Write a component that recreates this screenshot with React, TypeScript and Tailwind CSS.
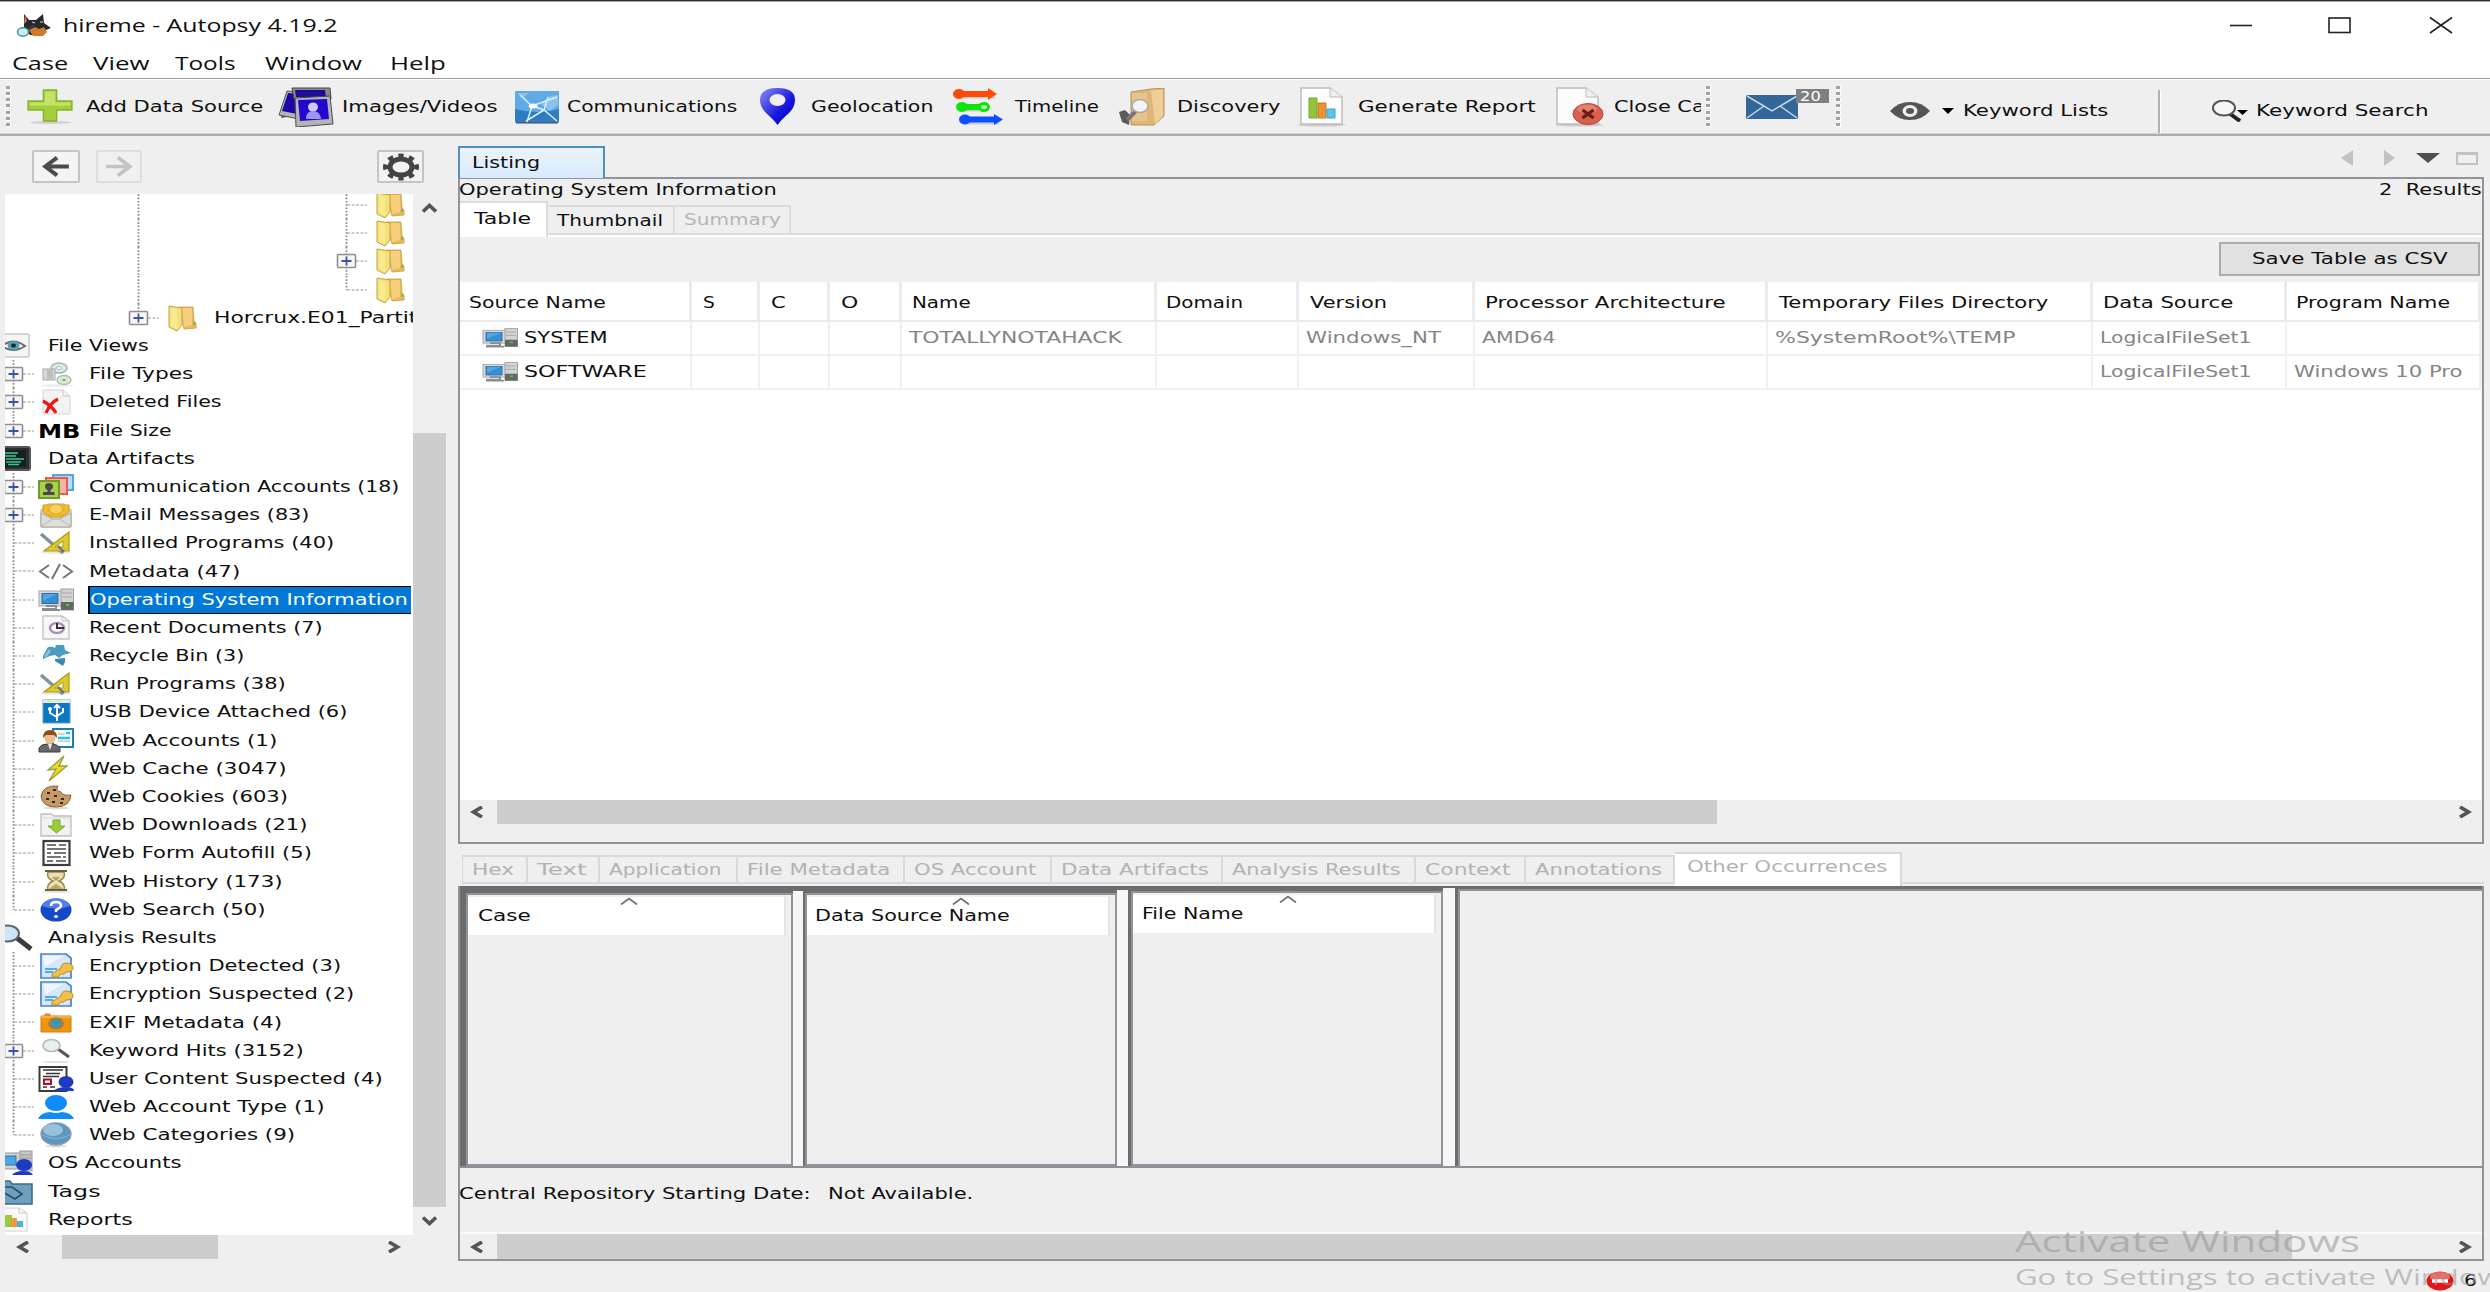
import React, { useLayoutEffect, useRef, useState } from "react";

/* Single line of text fitted horizontally to a given width. */
function T({ w, children, className = "" }: { w: number; children: string; className?: string }) {
  const ref = useRef<HTMLSpanElement>(null);
  const [scale, setScale] = useState(1);
  useLayoutEffect(() => {
    if (ref.current) setScale(w / ref.current.offsetWidth);
  }, [w, children]);
  return (
    <span className={"block shrink-0 whitespace-pre " + className} style={{ width: w }}>
      <span ref={ref} className="inline-block origin-left" style={{ transform: `scaleX(${scale})` }}>
        {children}
      </span>
    </span>
  );
}

type IconProps = { className?: string };
function Svg({ children, box = "0 0 36 28", className = "h-[28px] w-[36px]" }: { children: React.ReactNode; box?: string; className?: string }) {
  return (
    <svg viewBox={box} preserveAspectRatio="none" className={"shrink-0 " + className} fill="none">
      {children}
    </svg>
  );
}

const Folder = () => (
  <Svg>
    <path d="M14 3h14l1 14 2 2v5l-12 1z" fill="#e9b95a" stroke="#c99a3c" strokeWidth=".8" />
    <path d="M17 4h10v17l-8 2z" fill="#f8cf7c" />
    <path d="M4 2l13 2v17l-5 6-8-4z" fill="#f5e07a" stroke="#c2a33e" strokeWidth="1" />
    <path d="M6 4l6 2v19l-6-3z" fill="#fbee97" opacity=".7" />
    <path d="M29 18v3" stroke="#6fbf73" strokeWidth="2" />
  </Svg>
);
const EyeBox = () => (
  <Svg>
    <rect x="1" y="2" width="31" height="23" rx="1.5" fill="#f5f5f5" stroke="#c9c9c9" strokeWidth="1.5" />
    <path d="M5 14q11-9 23 0q-12 8-23 0z" fill="#fff" stroke="#6b6b6b" strokeWidth="2" />
    <ellipse cx="16.500" cy="13.500" rx="6" ry="4.500" fill="#4fa3b5" />
    <ellipse cx="16.500" cy="13.500" rx="2.500" ry="2" fill="#123" />
  </Svg>
);
const FileTypes = () => (
  <Svg>
    <ellipse cx="19" cy="25.500" rx="17" ry="1.500" fill="#eee" />
    <ellipse cx="21" cy="8" rx="8" ry="5" fill="#dfe9e6" stroke="#a9b0ae" strokeWidth="1.5" />
    <ellipse cx="21" cy="8" rx="2.500" ry="1.500" fill="#fff" stroke="#8cc" />
    <rect x="5" y="9" width="12" height="11" fill="#d8d8d8" stroke="#aaa" />
    <rect x="9" y="10" width="6" height="9" fill="#bdbdbd" />
    <ellipse cx="26" cy="20" rx="7" ry="4.500" fill="#dcebd0" stroke="#b4bdae" strokeWidth="1.5" />
    <ellipse cx="26" cy="20" rx="2" ry="1.300" fill="#7fbf6a" />
  </Svg>
);
const DeletedFiles = () => (
  <Svg>
    <path d="M5 2h20l7 6v18H5z" fill="#f3f3f3" stroke="#d5d5d5" />
    <path d="M25 2v6h7" stroke="#ccc" />
    <path d="M5 13q9 5 13 12M20 11q-8 4-12 14" stroke="#f01414" strokeWidth="3.200" />
  </Svg>
);
const Terminal = () => (
  <Svg>
    <rect x="0" y="2" width="33" height="23" rx="2" fill="#2c2f31" stroke="#55595b" strokeWidth="2" />
    <rect x="4" y="5" width="25" height="17" fill="#16211f" />
    <path d="M6 8h15M6 11h13M9 14h18M9 17h15M11 19.500h11" stroke="#37c795" strokeWidth="1.600" />
  </Svg>
);
const Accounts = () => (
  <Svg>
    <rect x="15" y="2" width="20" height="15" fill="#b5daf4" stroke="#56a5d8" strokeWidth="2" />
    <rect x="8" y="5" width="21" height="16" fill="#f5b3a9" stroke="#e2604c" strokeWidth="2" />
    <rect x="1" y="8" width="20" height="17" fill="#a8cf4f" stroke="#6d9c22" strokeWidth="2" />
    <ellipse cx="11" cy="13.500" rx="4" ry="3.500" fill="#4a4a4a" />
    <path d="M9.500 15h3v4h4v3H5v-3h4.500z" fill="#4a4a4a" />
  </Svg>
);
const Mail = () => (
  <Svg>
    <path d="M3 9l7-6h16l7 6v17H3z" fill="#e5e5e2" stroke="#a8a8a0" />
    <path d="M5 4h26v7l-8 5H13l-8-5z" fill="#f1bb2c" stroke="#d59b16" />
    <ellipse cx="18" cy="8" rx="7" ry="5" fill="#f7d05c" stroke="#d9a425" />
    <path d="M3 12l12 6h6l12-6v14H3z" fill="#dededa" stroke="#a9a9a2" />
    <path d="M4 25l10-7M32 25l-10-7" stroke="#b9b9b2" />
  </Svg>
);
const Programs = () => (
  <Svg>
    <ellipse cx="18" cy="23.500" rx="15" ry="1.500" fill="#e8e8e8" />
    <path d="M3 5l22 19" stroke="#7f919b" strokeWidth="3.500" />
    <path d="M31 3v19H6z" fill="#dcc832" stroke="#b09a14" strokeWidth="1.200" />
    <path d="M25 12v6h-8z" fill="#fff" stroke="#b09a14" />
    <path d="M20 17l6 6" stroke="#5f717b" strokeWidth="2" />
  </Svg>
);
const Code = () => (
  <Svg>
    <path d="M11 7L2 13.500L11 20M25 7l9 6.500L25 20M22 6l-8 15" stroke="#757575" strokeWidth="2" />
  </Svg>
);
const Computer = ({ className = "h-[28px] w-[36px]" }: IconProps) => (
  <Svg className={className}>
    <rect x="1" y="5" width="24" height="15" fill="#d9d9d9" stroke="#a5a5a5" />
    <rect x="4" y="7.500" width="16" height="10" fill="#3390d4" stroke="#2a6fa8" />
    <path d="M5 8h14l-14 7z" fill="#6bb6e8" opacity=".6" />
    <path d="M8 20h10v3H5v1h17" stroke="#8c8c8c" strokeWidth="2" />
    <rect x="23" y="3" width="12.500" height="21" fill="#d2d2d2" stroke="#a0a0a0" />
    <path d="M24 7h10M24 11h10" stroke="#aaa" />
    <rect x="23" y="16" width="12.500" height="8" fill="#666" />
    <rect x="28" y="18" width="3" height="2" fill="#3fcf3f" />
  </Svg>
);
const Recent = () => (
  <Svg>
    <path d="M5 2h19l7 5v18H5z" fill="#f7f7f7" stroke="#c3c3c3" strokeWidth="1.300" />
    <path d="M24 2v5h7" stroke="#c3c3c3" />
    <ellipse cx="19" cy="14" rx="7" ry="5" fill="#fff" stroke="#ab8db5" strokeWidth="2.500" />
    <path d="M19 9v5h7" stroke="#333" strokeWidth="2" />
  </Svg>
);
const Recycle = () => (
  <Svg>
    <path d="M5 14l5-9q4-1 7 1l1-3h8l1 5 6 3-8 2-4 3-4-3-5 1-7 3z" fill="#4c9cc0" />
    <path d="M12 8l-5 7" stroke="#8cc4dd" strokeWidth="2.500" />
    <path d="M17 17l10-1v4l-2 4-8-5z" fill="#3d89ad" />
  </Svg>
);
const Usb = () => (
  <Svg>
    <rect x="5" y="2" width="27" height="23" fill="#0b78c4" stroke="#5b9fcc" />
    <rect x="5" y="2" width="27" height="3" fill="#e9e9e9" />
    <path d="M9 3h3" stroke="#ee3" strokeWidth="2" />
    <path d="M19 8v15M12 11v4l7 4M25 10v4l-6 4M16 10l3-3 3 3" stroke="#fff" strokeWidth="2" />
    <circle cx="12" cy="11" r="2" fill="#fff" />
  </Svg>
);
const WebAccounts = () => (
  <Svg>
    <rect x="15" y="2" width="20" height="18" fill="#fff" stroke="#1c7fb0" strokeWidth="2" />
    <path d="M20 7h7M20 14h12" stroke="#bcc" strokeWidth="1.500" />
    <path d="M20 11h12M28 6h4" stroke="#24c3ee" strokeWidth="2.500" />
    <path d="M1 25v-4q2-4 8-4h6q6 1 7 5v3z" fill="#686868" stroke="#3c3c3c" />
    <path d="M10 17h4l-2 6z" fill="#eee" />
    <ellipse cx="12" cy="11" rx="5.500" ry="6" fill="#efbf93" />
    <path d="M5 11q0-8 7-8t7 8l-3-3H8z" fill="#8e4e1c" />
  </Svg>
);
const Cache = () => (
  <Svg>
    <path d="M26 1L10 15l8-1-7 12 18-15h-8z" fill="#e6dc1c" stroke="#9d9a4a" strokeWidth="1.300" />
  </Svg>
);
const Cookie = () => (
  <Svg>
    <ellipse cx="18" cy="25" rx="13" ry="1.500" fill="#ddd" />
    <path d="M20 3q-3 5 3 6 1 4 10 3-1 12-15 12T3 13Q5 2 20 3z" fill="#c49a68" stroke="#8a6437" />
    <path d="M9 10h3M15 7h3M8 16h3M16 13h3M14 19h3M23 16h3M22 20h3" stroke="#3e2611" strokeWidth="2.200" />
  </Svg>
);
const Download = () => (
  <Svg>
    <path d="M3 3h10l3 2h17v20H3z" fill="#f2f2f2" stroke="#bdbdbd" strokeWidth="1.300" />
    <path d="M3 7h30" stroke="#d8d8d8" />
    <path d="M15 9h7v6h5l-8.500 7L10 15h5z" fill="#9acb3c" stroke="#7aa92c" />
  </Svg>
);
const Form = () => (
  <Svg>
    <rect x="5.500" y="2" width="26" height="24" fill="#fff" stroke="#3d3d3d" strokeWidth="2.200" />
    <path d="M9 6h9M21 6h7M9 10h19M9 14h4M16 14h12M9 18h14M25 18h3M9 22h6M18 22h10" stroke="#4a4a4a" strokeWidth="1.700" />
  </Svg>
);
const Hourglass = () => (
  <Svg>
    <ellipse cx="18" cy="24" rx="15" ry="1" fill="#e5e5e5" />
    <path d="M10 4h16q2 6-5 9 7 3 5 9H10q-2-6 5-9-7-3-5-9z" fill="#e8dfb5" stroke="#9a8a4e" strokeWidth="1.500" />
    <path d="M12 20l6-4 6 4v2H12zM14 9h8l-4 4z" fill="#b7a45f" />
    <path d="M7 3h22M7 22h22" stroke="#6e6034" strokeWidth="2.200" />
  </Svg>
);
const Help = () => (
  <Svg>
    <ellipse cx="18" cy="14" rx="15.500" ry="11.500" fill="#1549c9" />
    <path d="M4 10q4-8 14-8t14 8q-13 5-28 0z" fill="#5f8df0" opacity=".8" />
    <path d="M13 10q0-4 5-4t5 3.500q0 2-5 4.500v2" stroke="#fff" strokeWidth="2.600" />
    <ellipse cx="18" cy="20.500" rx="2" ry="1.600" fill="#fff" />
  </Svg>
);
const Analysis = () => (
  <Svg>
    <path d="M20 14l14 11" stroke="#3b3b3b" strokeWidth="5" />
    <ellipse cx="11" cy="9.500" rx="11" ry="8" fill="#cfe4f5" stroke="#5c6268" strokeWidth="2" />
  </Svg>
);
const Encryption = () => (
  <Svg>
    <path d="M3 2h25l5 4v20H3z" fill="#d5e7fa" stroke="#4a83c9" strokeWidth="1.700" />
    <path d="M5 4l20 0-18 11z" fill="#eef6fe" />
    <path d="M7 17h12M7 20h8" stroke="#5aa8e8" strokeWidth="2" />
    <path d="M14 25v-3l9-6q0-5 6-5 6 1 6 5t-7 4l-2 2h-3l-3 3z" fill="#f0c14a" stroke="#b98c22" />
  </Svg>
);
const Camera = () => (
  <Svg>
    <path d="M3 7h4V5h5v2h21v16H3z" fill="#f0960e" stroke="#d27f06" />
    <path d="M3 8h30" stroke="#f9bb58" strokeWidth="1.500" />
    <ellipse cx="18" cy="14.500" rx="7" ry="5.500" fill="#5f8f96" stroke="#b5772a" strokeWidth="1.500" />
    <ellipse cx="18" cy="14.500" rx="3.500" ry="3" fill="#2e9ab5" />
  </Svg>
);
const Lens = () => (
  <Svg>
    <ellipse cx="18" cy="25" rx="15" ry="1" fill="#e0e0e0" />
    <path d="M20 12l11 8" stroke="#555" strokeWidth="3" />
    <ellipse cx="13.500" cy="8.500" rx="8.500" ry="6" fill="#e6f0f0" stroke="#b5baba" strokeWidth="1.700" />
  </Svg>
);
const UserContent = () => (
  <Svg>
    <rect x="1.500" y="2" width="27" height="24" fill="#fff" stroke="#3a3a3a" strokeWidth="2" />
    <path d="M5 5h20M8 8.500h14M5 11.500h16M5 22h4M12 22h5" stroke="#333" strokeWidth="1.500" />
    <rect x="6" y="14.500" width="7" height="4.500" stroke="#b01030" strokeWidth="2" />
    <ellipse cx="28" cy="17" rx="7.500" ry="6" fill="#1d3bc1" />
    <path d="M15 26q5-4 13-4t8 4z" fill="#1d3bc1" />
  </Svg>
);
const Person = () => (
  <Svg>
    <ellipse cx="18" cy="10" rx="11" ry="8" fill="#0f8bfd" />
    <path d="M0 26q2-6 12-7 6 2 12 0 10 1 12 7z" fill="#0f8bfd" />
  </Svg>
);
const Globe = () => (
  <Svg>
    <ellipse cx="18" cy="25" rx="11" ry="1.500" fill="#ddd" />
    <ellipse cx="18" cy="13" rx="15" ry="11" fill="#5e97bd" stroke="#8a9ba8" strokeWidth="1.300" />
    <ellipse cx="15" cy="9" rx="10" ry="6" fill="#b3d3e8" opacity=".7" />
    <path d="M4 14q14 7 28 0" stroke="#86b5d3" />
  </Svg>
);
const OsAccounts = () => (
  <Svg>
    <rect x="0" y="4" width="24" height="16" fill="#d2d2d2" stroke="#999" />
    <rect x="2" y="7" width="17" height="9" fill="#4da5e2" stroke="#2b75ad" />
    <rect x="23" y="2" width="12" height="20" fill="#c5c5c5" stroke="#999" />
    <path d="M24 6h10M24 9h10" stroke="#999" />
    <ellipse cx="27" cy="16" rx="8" ry="6" fill="#1d3bc1" />
    <path d="M15 26q3-4 11-4t10 4z" fill="#1d3bc1" />
  </Svg>
);
const TagsIcon = () => (
  <Svg>
    <path d="M0 3h13l2 3h20v20H0z" fill="#6f9fbe" stroke="#3d6986" strokeWidth="1.500" />
    <path d="M6 9h9l10 7-7 5L6 14z" stroke="#2c4c63" strokeWidth="1.700" />
  </Svg>
);
const Reports = () => (
  <Svg>
    <path d="M4 2h18l8 5v18H4z" fill="#fafafa" stroke="#cfcfcf" />
    <path d="M22 2v5h8" stroke="#ccc" />
    <path d="M4 9h11v12H4z" fill="#9acb3c" />
    <path d="M14 12h6v9h-6z" fill="#f29a3a" />
    <path d="M20 15h6v6h-6z" fill="#41b8e0" />
  </Svg>
);
const Mb = () => (
  <span className="-mr-[6px] block font-bold text-black">
    <T w={42} className="text-[19px] leading-[28px]">MB</T>
  </span>
);

type Item = { icon: () => React.ReactElement; t: string; w: number; root?: boolean; plus?: boolean; sel?: boolean; last?: boolean };
const items: Item[] = [
  { icon: EyeBox, t: "File Views", w: 101, root: true },
  { icon: FileTypes, t: "File Types", w: 105, plus: true },
  { icon: DeletedFiles, t: "Deleted Files", w: 133, plus: true },
  { icon: Mb, t: "File Size", w: 83, plus: true, last: true },
  { icon: Terminal, t: "Data Artifacts", w: 147, root: true },
  { icon: Accounts, t: "Communication Accounts (18)", w: 311, plus: true },
  { icon: Mail, t: "E-Mail Messages (83)", w: 221, plus: true },
  { icon: Programs, t: "Installed Programs (40)", w: 245 },
  { icon: Code, t: "Metadata (47)", w: 151 },
  { icon: Computer, t: "Operating System Information", w: 318, sel: true },
  { icon: Recent, t: "Recent Documents (7)", w: 234 },
  { icon: Recycle, t: "Recycle Bin (3)", w: 155 },
  { icon: Programs, t: "Run Programs (38)", w: 197 },
  { icon: Usb, t: "USB Device Attached (6)", w: 258 },
  { icon: WebAccounts, t: "Web Accounts (1)", w: 188 },
  { icon: Cache, t: "Web Cache (3047)", w: 197 },
  { icon: Cookie, t: "Web Cookies (603)", w: 199 },
  { icon: Download, t: "Web Downloads (21)", w: 219 },
  { icon: Form, t: "Web Form Autofill (5)", w: 223 },
  { icon: Hourglass, t: "Web History (173)", w: 193 },
  { icon: Help, t: "Web Search (50)", w: 177, last: true },
  { icon: Analysis, t: "Analysis Results", w: 169, root: true },
  { icon: Encryption, t: "Encryption Detected (3)", w: 252 },
  { icon: Encryption, t: "Encryption Suspected (2)", w: 265 },
  { icon: Camera, t: "EXIF Metadata (4)", w: 193 },
  { icon: Lens, t: "Keyword Hits (3152)", w: 215, plus: true },
  { icon: UserContent, t: "User Content Suspected (4)", w: 294 },
  { icon: Person, t: "Web Account Type (1)", w: 236 },
  { icon: Globe, t: "Web Categories (9)", w: 206, last: true },
  { icon: OsAccounts, t: "OS Accounts", w: 134, root: true },
  { icon: TagsIcon, t: "Tags", w: 52, root: true },
  { icon: Reports, t: "Reports", w: 84, root: true },
];

/* Dotted tree connector, 31px wide, with the vertical line 10px from its left edge. */
function Branch({ plus, last }: { plus?: boolean; last?: boolean }) {
  return (
    <svg viewBox="0 0 31 28.190" className="h-[28.190px] w-[31px] shrink-0" fill="none">
      <path d={last ? "M10.500 0V14" : "M10.500 0V28.190"} stroke="#8a8a8a" strokeDasharray="1.600 1.700" strokeWidth="1.800" />
      <path d="M11 14H31" stroke="#9a9a9a" strokeDasharray="3 1.500" strokeWidth="1.200" />
      {plus && (
        <>
          <rect x="1.500" y="7.500" width="18" height="13" rx="1" fill="#f6f6f6" stroke="#8e8e8e" strokeWidth="1.600" />
          <path d="M5.500 14h10M10.500 9.500v9" stroke="#3a55a0" strokeWidth="1.800" />
        </>
      )}
    </svg>
  );
}

function TreeRow({ it }: { it: Item }) {
  const Icon = it.icon;
  if (it.root)
    return (
      <div className="flex h-[28.190px] items-center">
        <div className="-ml-[8px] mr-[15px] w-[36px]"><Icon /></div>
        <T w={it.w}>{it.t}</T>
      </div>
    );
  return (
    <div className="flex h-[28.190px] items-center">
      <div className="-ml-[2px]"><Branch plus={it.plus} last={it.last} /></div>
      <div className="ml-[4px] mr-[14px] w-[36px]"><Icon /></div>
      {it.sel ? (
        <div className="flex h-[28px] w-[323px] items-center border-y border-l-2 border-black bg-[#0078d7] text-white">
          <T w={it.w}>{it.t}</T>
        </div>
      ) : (
        <div className="pl-[1px]"><T w={it.w}>{it.t}</T></div>
      )}
    </div>
  );
}

function Chevron({ d, className }: { d: "l" | "r" | "u" | "d"; className: string }) {
  const p = { l: "M12 1L3.500 6L12 11", r: "M3 1l8.500 5L3 11", u: "M1 9.500L7.500 3.500L14 9.500", d: "M1 2.500L7.500 8.500L14 2.500" }[d];
  return (
    <svg viewBox="0 0 15 12" preserveAspectRatio="none" className={"h-[12px] w-[15px] shrink-0 " + className} fill="none">
      <path d={p} stroke="#555" strokeWidth="3.700" />
    </svg>
  );
}

function Grip() {
  return (
    <div className="flex h-[42px] w-[6px] shrink-0 flex-col justify-between">
      {[0, 1, 2, 3, 4, 5, 6].map((i) => (
        <div key={i} className="h-[4px] w-[5px] border-b border-r border-white bg-[#a2a2a2]" />
      ))}
    </div>
  );
}

const cols = [
  { h: "Source Name", w: 137, cw: "w-[232px]", pl: "pl-[9px]" },
  { h: "S", w: 12, cw: "w-[68px]", pl: "pl-[11px]" },
  { h: "C", w: 15, cw: "w-[70px]", pl: "pl-[11px]" },
  { h: "O", w: 17, cw: "w-[72px]", pl: "pl-[11px]" },
  { h: "Name", w: 59, cw: "w-[255px]", pl: "pl-[10px]" },
  { h: "Domain", w: 77, cw: "w-[142px]", pl: "pl-[9px]" },
  { h: "Version", w: 77, cw: "w-[176px]", pl: "pl-[11px]" },
  { h: "Processor Architecture", w: 240, cw: "w-[293px]", pl: "pl-[10px]" },
  { h: "Temporary Files Directory", w: 270, cw: "w-[325px]", pl: "pl-[11px]" },
  { h: "Data Source", w: 130, cw: "w-[194px]", pl: "pl-[10px]" },
  { h: "Program Name", w: 154, cw: "w-[194px]", pl: "pl-[9px]" },
];
const rows: [string, number][][] = [
  [["SYSTEM", 84], ["", 0], ["", 0], ["", 0], ["TOTALLYNOTAHACK", 213], ["", 0], ["Windows_NT", 135], ["AMD64", 74], ["%SystemRoot%\\TEMP", 241], ["LogicalFileSet1", 152], ["", 0]],
  [["SOFTWARE", 123], ["", 0], ["", 0], ["", 0], ["", 0], ["", 0], ["", 0], ["", 0], ["", 0], ["LogicalFileSet1", 152], ["Windows 10 Pro", 168]],
];

const tabs = [
  { t: "Hex", w: 42, cw: "w-[65px]" },
  { t: "Text", w: 49, cw: "w-[72px]" },
  { t: "Application", w: 113, cw: "w-[138px]" },
  { t: "File Metadata", w: 143, cw: "w-[167px]" },
  { t: "OS Account", w: 123, cw: "w-[147px]" },
  { t: "Data Artifacts", w: 148, cw: "w-[171px]" },
  { t: "Analysis Results", w: 169, cw: "w-[193px]" },
  { t: "Context", w: 86, cw: "w-[110px]" },
  { t: "Annotations", w: 127, cw: "w-[149px]" },
];

function MiniTable({ t, w, cw, caret, pt, pl }: { t: string; w: number; cw: string; caret: string; pt: string; pl: string }) {
  return (
    <div className={"shrink-0 " + pt}>
      <div className={"h-full border-2 border-[#90939a] bg-[#efefef] " + cw}>
        <div className={"mr-[5px] h-[38px] border-r-2 border-[#e4e4e4] bg-white " + pl}>
          <svg viewBox="0 0 18 8" className={"block h-[8px] w-[18px] " + caret} fill="none">
            <path d="M1 7.500L9 1.500l8 6" stroke="#6f6f6f" strokeWidth="1.700" />
          </svg>
          <T w={w} className="leading-[22px]">{t}</T>
        </div>
      </div>
    </div>
  );
}

function TitleBar() {
  return (
    <div className="flex h-[45px] shrink-0 items-center bg-white font-['Open_Sans','Noto_Sans',sans-serif] text-[18px]">
      <Svg box="0 0 36 24" className="ml-[16px] h-[24px] w-[36px]">
        <path d="M8 1l5 6h7l7-6 1 9 7 5-5 2-4 5H14L8 15z" fill="#26282c" />
        <path d="M9 2l2 6-3 3z" fill="#d77b4e" />
        <path d="M13 17l6-3 4 2 5-2 3 5-4 4H17z" fill="#cf7a26" />
        <path d="M16 9l3 1M24 9l3 0" stroke="#ddd" />
        <ellipse cx="7" cy="19" rx="5.500" ry="4.200" fill="#c2f0f5" stroke="#4d8e98" strokeWidth="1.500" />
        <path d="M12 16l6-4" stroke="#444" strokeWidth="1.500" />
      </Svg>
      <T w={275} className="ml-[11px]">hireme - Autopsy 4.19.2</T>
      <svg viewBox="0 0 224 18" className="ml-auto mr-[37px] h-[18px] w-[224px]" fill="none" stroke="#222" strokeWidth="1.600">
        <path d="M1 9.500h22" />
        <rect x="100" y="2" width="21" height="14.500" />
        <path d="M201 1.500l22 15.500M223 1.500L201 17" />
      </svg>
    </div>
  );
}

function Toolbar() {
  return (
    <div className="flex h-[53px] shrink-0 items-center overflow-hidden bg-[#efefef]">
      <div className="ml-[6px]"><Grip /></div>
      <Svg box="0 0 46 36" className="ml-[14px] h-[36px] w-[47px]">
        <ellipse cx="24" cy="33.500" rx="20" ry="1.500" fill="#cfcfcf" />
        <path d="M17 1h13v11h15v9H30v11H17V21H2v-9h15z" fill="#a4cf3a" stroke="#86b12a" strokeWidth="1.300" />
        <path d="M18.500 2.500h10v11h15v3h-40v-3h15z" fill="#c4e26c" />
      </Svg>
      <T w={177} className="ml-[13px]">Add Data Source</T>
      <Svg box="0 0 56 40" className="ml-[15px] h-[40px] w-[56px]">
        <path d="M9 5l36-2 6 20-48 8z" fill="#5a5a5a" />
        <path d="M9 4l18 2-6 26-20-4z" fill="#b5b5b5" stroke="#555" />
        <path d="M10 6l14 1-5 20-15-3z" fill="#1a08a8" />
        <path d="M14 1h38l1 11H16z" fill="#8b8b8b" stroke="#444" />
        <path d="M17 3h30l1 7H18z" fill="#1b0b96" />
        <path d="M17 11l35-2 3 28-37 3z" fill="#b4b4b4" stroke="#4a4a4a" />
        <path d="M20 13l29-1 2 20-29 2z" fill="#2208cf" />
        <ellipse cx="35" cy="20" rx="5" ry="4.500" fill="#cfc9ff" />
        <path d="M28 32q0-8 7-8t8 8z" fill="#9f94f0" />
      </Svg>
      <T w={155} className="ml-[8px]">Images/Videos</T>
      <Svg box="0 0 46 34" className="ml-[17px] h-[34px] w-[46px]">
        <rect x="1" y="1" width="44" height="32" rx="2" fill="#2f7dc0" />
        <path d="M1 3q0-2 2-2h40q2 0 2 2v16q-22 6-44 0z" fill="#5fa9e4" />
        <path d="M27 14l9-8 8-1v10l-8 6zM3 3h12L9 8z" fill="#9bcdf1" opacity=".7" />
        <path d="M6 5l12 11 25-9M18 16l-5 16M18 16l12 4 13 11M30 20L12 31M30 20l4-13" stroke="#d8effd" strokeWidth="1.500" />
        <ellipse cx="19" cy="16" rx="4.500" ry="2.500" fill="#fff" />
        <path d="M2 33h42" stroke="#4a4a4a" />
      </Svg>
      <T w={170} className="ml-[7px]">Communications</T>
      <Svg box="0 0 37 39" className="ml-[22px] h-[39px] w-[37px]">
        <defs>
          <linearGradient id="pin" x1="0" y1="0" x2="1" y2="1">
            <stop offset="0" stopColor="#8c8ff0" />
            <stop offset=".6" stopColor="#1616e0" />
            <stop offset="1" stopColor="#0000b8" />
          </linearGradient>
        </defs>
        <path d="M18.500 1Q36 1 36 13q0 7-6 13-8 7-11.500 12Q15 33 7 26 1 20 1 13 1 1 18.500 1z" fill="url(#pin)" />
        <ellipse cx="18.500" cy="13" rx="8" ry="6" fill="#efefef" />
      </Svg>
      <T w={123} className="ml-[15px]">Geolocation</T>
      <Svg box="0 0 52 38" className="ml-[18px] h-[38px] w-[52px]">
        <path d="M3 8h40M11 34h36M8 21h24" stroke="#aaa" strokeWidth="5" opacity=".5" />
        <path d="M6 6h34" stroke="#ff4a05" strokeWidth="6" />
        <path d="M36 0l9 6-9 6z" fill="#ff4a05" />
        <ellipse cx="7" cy="6" rx="6" ry="5" fill="#ff4a05" />
        <path d="M10 19h20" stroke="#0be50b" strokeWidth="6" />
        <ellipse cx="10" cy="19" rx="6" ry="5" fill="#0be50b" />
        <ellipse cx="32" cy="19" rx="4.500" ry="3.500" fill="#b8f5b8" stroke="#0be50b" strokeWidth="3" />
        <path d="M13 31.500h30" stroke="#0a50ff" strokeWidth="6" />
        <path d="M42 26l9 5.500-9 5.500z" fill="#0a50ff" />
        <ellipse cx="13" cy="31.500" rx="6" ry="5" fill="#0a50ff" />
      </Svg>
      <T w={84} className="ml-[11px]">Timeline</T>
      <Svg box="0 0 46 38" className="ml-[20px] h-[38px] w-[46px]">
        <path d="M12 4l20-3 13-1v28l-10 9H12z" fill="#dcb776" stroke="#b9935a" />
        <path d="M32 2h12v26l-8 8z" fill="#f0cf96" />
        <path d="M13 5h15v28H13z" fill="#e6c48c" />
        <path d="M0 24l6-2 5 5-1 10-7-3z" fill="#5a5a5a" />
        <path d="M8 32l9-9" stroke="#777" strokeWidth="4" />
        <ellipse cx="21" cy="18" rx="8" ry="6.500" fill="#f3f3f3" stroke="#aaa" strokeWidth="1.500" />
      </Svg>
      <T w={104} className="ml-[12px]">Discovery</T>
      <Svg box="0 0 50 40" className="ml-[16px] h-[40px] w-[50px]">
        <ellipse cx="25" cy="38" rx="24" ry="1.500" fill="#ccc" />
        <path d="M4 1h29l12 9v27H4z" fill="#fdfdfd" stroke="#bdbdbd" strokeWidth="1.500" />
        <path d="M33 1v9h12" fill="#eee" stroke="#bdbdbd" />
        <path d="M12 11h8v20h-8z" fill="#93c53c" stroke="#78a52d" />
        <path d="M21 16h8v15h-8z" fill="#eb9437" stroke="#c97622" />
        <path d="M30 22h8v9h-8z" fill="#5ac5e8" stroke="#3aa5cc" />
      </Svg>
      <T w={178} className="ml-[11px]">Generate Report</T>
      <Svg box="0 0 52 40" className="ml-[18px] h-[40px] w-[52px]">
        <ellipse cx="25" cy="38" rx="24" ry="1.500" fill="#ccc" />
        <path d="M3 1h29l12 9v27H3z" fill="#fbfbfb" stroke="#bdbdbd" strokeWidth="1.500" />
        <path d="M32 1v9h12" fill="#eee" stroke="#bdbdbd" />
        <ellipse cx="34" cy="27" rx="15" ry="10.500" fill="#d95f4f" stroke="#b84a3c" />
        <ellipse cx="33" cy="22" rx="10" ry="4.500" fill="#ee9586" opacity=".6" />
        <path d="M28.500 23l11 8M39.500 23l-11 8" stroke="#6a1d15" strokeWidth="3.400" />
      </Svg>
      <div className="ml-[8px] w-[87px] overflow-hidden"><T w={90}>Close Ca</T></div>
      <div className="ml-[5px]"><Grip /></div>
      <div className="relative ml-[33px] h-[36px] w-[86px]">
        <Svg box="0 0 54 26" className="mt-[5px] h-[26px] w-[54px]">
          <rect x="1" y="1" width="52" height="24" rx="1.500" fill="#336699" />
          <path d="M2 2l25 15L52 2M2 24l17-12M52 24L35 12" stroke="#c8d8e8" strokeWidth="1.500" />
        </Svg>
        <span className="absolute left-[51px] top-0 flex h-[14px] w-[33px] items-center bg-[#7f7f7f] pl-[4px] text-[14px] leading-[14px] text-white">
          <T w={21}>20</T>
        </span>
      </div>
      <div className="ml-[5px]"><Grip /></div>
      <div className="flex h-full items-center pt-[8px]">
        <Svg box="0 0 40 18" className="ml-[48px] h-[18px] w-[40px]">
          <path d="M0 9Q8 0 20 0t20 9q-8 9-20 9T0 9z" fill="#555" />
          <ellipse cx="20" cy="9" rx="7.500" ry="6" fill="#efefef" />
          <ellipse cx="20" cy="9" rx="4" ry="3" fill="#555" />
        </Svg>
        <Svg box="0 0 12 6" className="ml-[12px] h-[6px] w-[12px]"><path d="M0 0h12L6 6z" fill="#000" /></Svg>
        <T w={145} className="ml-[9px]">Keyword Lists</T>
      </div>
      <div className="ml-[50px] mt-[10px] h-[43px] w-[3px] border-r border-white bg-[#b0b0b0]" />
      <div className="flex h-full items-center pt-[8px]">
        <Svg box="0 0 38 22" className="ml-[50px] h-[22px] w-[38px]">
          <path d="M18 13l11 8" stroke="#222" strokeWidth="4" />
          <ellipse cx="13" cy="8" rx="11" ry="7.500" fill="#f6f6f6" stroke="#555" strokeWidth="2" />
          <path d="M26 10h11l-5.500 5z" fill="#000" />
        </Svg>
        <T w={172} className="ml-[7px]">Keyword Search</T>
      </div>
    </div>
  );
}

function FolderBranch({ plus, last }: { plus?: boolean; last?: boolean }) {
  return (
    <div className="flex h-[28.190px] shrink-0 items-center">
      <svg viewBox="0 0 200 28.190" className="h-[28.190px] w-[200px] shrink-0" fill="none">
        <path d="M133.500 0V28.190" stroke="#8a8a8a" strokeDasharray="1.600 1.700" strokeWidth="1.800" />
      </svg>
      <div className="ml-[131px]"><Branch plus={plus} last={last} /></div>
      <div className="ml-[6px]"><Folder /></div>
    </div>
  );
}

function Sidebar() {
  return (
    <div className="flex h-full w-[458px] shrink-0 flex-col">
      <div className="flex h-[61px] shrink-0 items-center">
        <div className="ml-[32px] flex h-[33px] w-[48px] items-center justify-center rounded-[2px] border-2 border-[#c4c4c4] bg-[#f4f4f4]">
          <Svg box="0 0 26 20" className="h-[21px] w-[28px]"><path d="M25 10H3M14 1.500L3 10l11 8.500" stroke="#4c4c4c" strokeWidth="3.800" /></Svg>
        </div>
        <div className="ml-[16px] flex h-[33px] w-[46px] items-center justify-center rounded-[2px] border-2 border-[#dedede] bg-[#f0f0f0]">
          <Svg box="0 0 26 20" className="h-[21px] w-[28px]"><path d="M1 10h22M12 1.500L23 10l-11 8.500" stroke="#c3c3c3" strokeWidth="3.500" /></Svg>
        </div>
        <div className="ml-[235px] flex h-[33px] w-[47px] items-center justify-center rounded-[2px] border-2 border-[#c4c4c4] bg-[#f2f2f2]">
          <Svg box="0 0 38 28" className="h-[28px] w-[38px]">
            <ellipse cx="19" cy="14" rx="15.500" ry="11" stroke="#444" strokeWidth="5" strokeDasharray="5 5" strokeDashoffset="2.500" pathLength="80" />
            <ellipse cx="19" cy="14" rx="11" ry="8" stroke="#444" strokeWidth="5" />
          </Svg>
        </div>
      </div>
      <div className="-mt-[3px] flex h-[1041px] shrink-0">
        <div className="ml-[5px] w-[408px] overflow-hidden bg-white text-[#101010]">
          <div className="-mt-[3px]">
            <FolderBranch />
            <FolderBranch />
            <FolderBranch plus />
            <FolderBranch last />
            <div className="flex h-[28.190px] items-center">
              <div className="ml-[123px]"><Branch plus last /></div>
              <div className="ml-[6px] mr-[13px]"><Folder /></div>
              <T w={203}>Horcrux.E01_Partit</T>
            </div>
            {items.map((it) => (
              <TreeRow key={it.t} it={it} />
            ))}
          </div>
        </div>
        <div className="flex w-[33px] flex-col">
          <Chevron d="u" className="ml-[9px] mt-[8px]" />
          <div className="mt-[219px] h-[774px] bg-[#cdcdcd]" />
          <Chevron d="d" className="ml-[9px] mt-[8px]" />
        </div>
      </div>
      <div className="flex h-[24px] shrink-0 items-center">
        <Chevron d="l" className="ml-[16px]" />
        <div className="ml-[31px] h-full w-[156px] bg-[#cdcdcd]" />
        <Chevron d="r" className="ml-[168px]" />
      </div>
    </div>
  );
}

function Listing() {
  return (
    <div className="flex h-[708px] w-[2026px] shrink-0 flex-col">
      <div className="flex h-[41px] shrink-0 items-end">
        <div className="relative z-10 -mb-[1px] flex h-[32px] w-[147px] items-center border-x-2 border-t-2 border-[#4f8fbf] bg-gradient-to-b from-[#ecf4fc] to-[#d9eafc] pl-[12px]">
          <T w={68}>Listing</T>
        </div>
        <svg viewBox="0 0 140 18" className="mb-[10px] ml-auto mr-[5px] h-[18px] w-[140px]" fill="none">
          <path d="M14 1v16L2 9zM45 1v16l11-8z" fill="#c2c2c2" />
          <path d="M77 4h24l-12 10z" fill="#4f4f4f" />
          <path d="M118 4h20v11h-20z" stroke="#c2c2c2" strokeWidth="2" />
          <path d="M117 4.500h22" stroke="#c2c2c2" strokeWidth="3" />
        </svg>
      </div>
      <div className="flex h-[667px] shrink-0 flex-col border-2 border-[#90939a] bg-[#efefef]">
        <div className="flex h-[22px] shrink-0 items-center">
          <T w={318} className="-ml-[1px]">Operating System Information</T>
          <T w={103} className="ml-auto">2  Results</T>
        </div>
        <div className="flex h-[36px] shrink-0 items-end">
          <div className="flex h-[36px] w-[88px] items-center border-r-2 border-t-2 border-[#dcdcdc] bg-white pb-[3px] pl-[14px]">
            <T w={57}>Table</T>
          </div>
          <div className="flex h-[32px] flex-1 border-b-[2px] border-white">
            <div className="flex h-[30px] w-[127px] items-center border-y-2 border-r-2 border-[#dcdcdc] pl-[9px] pt-[2px]"><T w={106}>Thumbnail</T></div>
            <div className="flex h-[30px] w-[116px] items-center border-y-2 border-r-2 border-[#dcdcdc] pl-[9px] text-[#b5b5b5]"><T w={97}>Summary</T></div>
            <div className="h-[30px] flex-1 border-b-2 border-[#dcdcdc]" />
          </div>
        </div>
        <div className="flex h-[45px] shrink-0 items-start justify-end pr-[2px] pt-[5px]">
          <div className="flex h-[34px] w-[261px] items-center justify-center border-2 border-[#acacac] bg-[#e1e1e1]">
            <T w={196}>Save Table as CSV</T>
          </div>
        </div>
        <div className="flex h-[40px] w-[2021px] shrink-0 bg-white">
          {cols.map((c) => (
            <div key={c.h} className={"flex h-full shrink-0 items-center border-b-2 border-r-[3px] border-[#ebebeb] pt-[4px] " + c.cw + " " + c.pl}>
              <T w={c.w}>{c.h}</T>
            </div>
          ))}
        </div>
        <div className="h-[478px] w-[2021px] shrink-0 bg-white text-[#858585]">
          {rows.map((r, k) => (
            <div key={k} className="flex h-[34px]">
              {r.map(([t, w], i) => (
                <div key={i} className={"flex h-full shrink-0 items-center border-b-2 border-r-2 border-[#f0f0f0] " + cols[i].cw + (i === 0 ? " pl-[22px] text-[#101010]" : " pl-[7px]")}>
                  {i === 0 && <Computer className="mr-[6px] h-[24px] w-[36px]" />}
                  {t && <T w={w}>{t}</T>}
                </div>
              ))}
            </div>
          ))}
        </div>
        <div className="flex h-[24px] shrink-0 items-center">
          <Chevron d="l" className="ml-[10px]" />
          <div className="ml-[12px] h-full w-[1220px] bg-[#cdcdcd]" />
          <Chevron d="r" className="ml-auto mr-[10px]" />
        </div>
      </div>
    </div>
  );
}

function ContentViewer() {
  return (
    <div className="flex h-[417px] w-[2026px] shrink-0 flex-col">
      <div className="mt-[8px] flex h-[34px] shrink-0 items-end text-[#b2b2b2]">
        <div className="ml-[4px] flex h-[31px]">
          <div className="h-[29px] w-[1px] bg-[#d9d9d9]" />
          {tabs.map((t) => (
            <div key={t.t} className={"flex h-[29px] shrink-0 items-center border-y-2 border-r-2 border-[#d9d9d9] pl-[9px] " + t.cw}>
              <T w={t.w}>{t.t}</T>
            </div>
          ))}
        </div>
        <div className="flex h-[34px] w-[227px] items-center border-r-2 border-t-2 border-[#d9d9d9] bg-white pb-[7px] pl-[12px]">
          <T w={201}>Other Occurrences</T>
        </div>
        <div className="mb-[2px] h-[2px] flex-1 bg-[#d9d9d9]" />
      </div>
      <div className="flex h-[375px] shrink-0 flex-col border-b-2 border-l-2 border-r-2 border-[#90939a]">
        <div className="flex h-[282px] shrink-0 border-b-2 border-[#8c8f95] bg-[#6c6d6e]">
          <MiniTable t="Case" w={53} cw="ml-[6px] w-[327px]" caret="ml-[142px] mt-[2px]" pt="pt-[7px]" pl="pl-[10px]" />
          <div className="mt-[5px] w-[10px] bg-[#f6f6f6]" />
          <MiniTable t="Data Source Name" w={195} cw="ml-[2px] w-[312px]" caret="ml-[137px] mt-[2px]" pt="pt-[7px]" pl="pl-[8px]" />
          <div className="mt-[4px] w-[11px] bg-[#f6f6f6]" />
          <MiniTable t="File Name" w={102} cw="ml-[3px] w-[312px]" caret="ml-[137px] mt-[2px]" pt="pt-[5px]" pl="pl-[9px]" />
          <div className="mt-[2px] w-[12px] bg-[#f6f6f6]" />
          <div className="ml-[3px] mt-[3px] flex-1 border-l-2 border-t-2 border-[#90939a] bg-[#efefef]" />
        </div>
        <div className="flex h-[66px] shrink-0 items-start gap-[17px] border-b-2 border-[#f9f9f9] pt-[14px]">
          <T w={352} className="-ml-[1px]">Central Repository Starting Date:</T>
          <T w={145}>Not Available.</T>
        </div>
        <div className="flex flex-1 items-center">
          <Chevron d="l" className="ml-[10px]" />
          <div className="ml-[12px] h-full w-[1795px] bg-[#cdcdcd]" />
          <Chevron d="r" className="ml-auto mr-[10px]" />
        </div>
      </div>
    </div>
  );
}

export default function App() {
  return (
    <div className="relative flex h-[1292px] w-[2490px] flex-col overflow-hidden bg-[#efefef] font-['DejaVu_Sans',sans-serif] text-[15.500px] leading-[24px] text-[#101010]">
      <div className="h-[2px] shrink-0 border-b border-[#aaa] bg-[#2c2a2e]" />
      <TitleBar />
      <div className="flex h-[31px] shrink-0 items-center bg-white pl-[12px] font-['Open_Sans','Noto_Sans',sans-serif] text-[18px]">
        <T w={56}>Case</T>
        <T w={56} className="ml-[25px]">View</T>
        <T w={61} className="ml-[26px]">Tools</T>
        <T w={97} className="ml-[29px]">Window</T>
        <T w={56} className="ml-[28px]">Help</T>
      </div>
      <div className="h-[2px] shrink-0 border-b border-white bg-[#9c9c9c]" />
      <Toolbar />
      <div className="h-[3px] shrink-0 border-t border-[#d4d4d4] bg-[#acacac]" />
      <div className="flex h-[1125px] shrink-0">
        <Sidebar />
        <div className="flex flex-col">
          <Listing />
          <ContentViewer />
        </div>
      </div>
      <div className="flex h-[31px] shrink-0 items-center justify-end pr-[13px] pt-[8px]">
        <Svg box="0 0 28 20" className="h-[20px] w-[28px]">
          <ellipse cx="14" cy="10" rx="13.500" ry="9.500" fill="#e01818" />
          <ellipse cx="14" cy="6" rx="10" ry="5" fill="#f58a8a" opacity=".7" />
          <path d="M6 10h16" stroke="#fff" strokeWidth="3.500" />
        </Svg>
        <T w={13} className="ml-[10px]">6</T>
      </div>
      <div className="pointer-events-none absolute left-[2015px] top-[1221px] font-['Open_Sans','Noto_Sans',sans-serif] text-[#9a9a9a]/60">
        <T w={345} className="text-[29px] leading-[40px]">Activate Windows</T>
        <T w={509} className="text-[22px] leading-[30px]">Go to Settings to activate Windows.</T>
      </div>
    </div>
  );
}
